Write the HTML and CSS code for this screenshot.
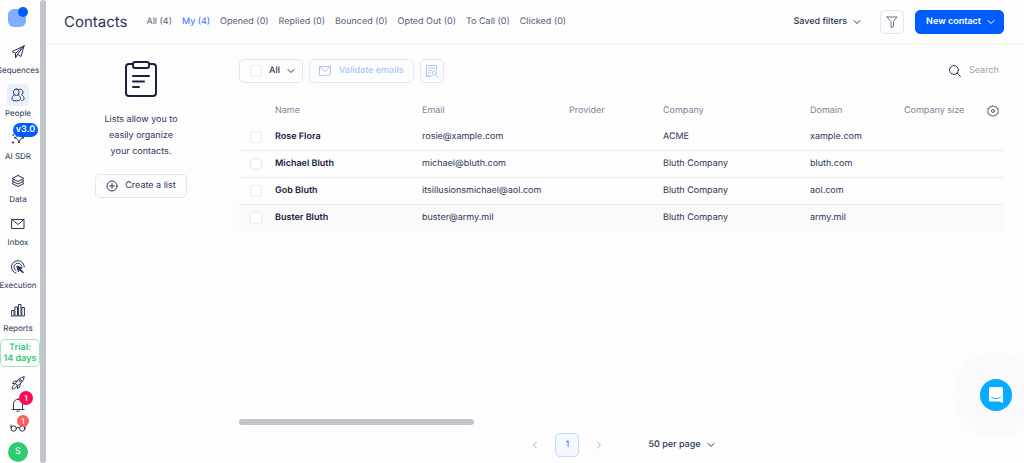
FILE: index.html
```html
<!DOCTYPE html>
<html lang="en">
<head>
    <meta charset="UTF-8">
    <meta name="viewport" content="width=device-width, initial-scale=1.0">
    <title>Contacts</title>
    <link rel="stylesheet" href="styles.css">
</head>
<body>
    <nav class="sidebar">
        <a href="#" class="logo" aria-label="Home">
            <svg width="22" height="20" viewBox="0 0 22 20">
                <rect x="1" y="2" width="18" height="18" rx="6" fill="#80adff"/>
                <circle cx="16" cy="5" r="5" fill="#005cff"/>
            </svg>
        </a>
        <a href="#" class="nav-item">
            <span class="nav-icon"><svg class="icon" width="14" height="14" viewBox="0 0 14 14"><path d="M13 1L1 6.500l3.500 1.800L13 1zM13 1L6.500 9.300l3.500 2.200L13 1zM4.500 8.300V13l2-3.700"/></svg></span>
            <span class="nav-label">Sequences</span>
        </a>
        <a href="#" class="nav-item active">
            <span class="nav-icon"><svg class="icon" width="14" height="14" viewBox="0 0 14 14"><rect x="2.500" y="1" width="5.500" height="6.500" rx="2.700"/><path d="M3 7C1.500 7.800 1 9 1 10.500c0 1.800 1 2.300 4.300 2.300s4.200-.5 4.200-2.300C9.500 9 9 7.800 7.500 7M8 1.300c2-.7 4 .5 4 2.700 0 1.300-.6 2.300-1.400 3 1.600.7 2.400 1.800 2.400 3.500 0 1.400-.8 1.900-2.200 2.100"/></svg></span>
            <span class="nav-label">People</span>
        </a>
        <a href="#" class="nav-item">
            <span class="nav-icon"><svg class="icon" width="14" height="14" viewBox="0 0 14 14"><path d="M8 1c.6 3.800 1.700 5 5 5.700-3.300.7-4.400 1.900-5 5.300-.6-3.400-1.700-4.600-5-5.300C6.300 6 7.400 4.800 8 1z"/><circle cx="2" cy="11.500" r=".7" fill="#2b3653"/><circle cx="2" cy="4" r=".3"/></svg></span>
            <span class="nav-label">AI SDR</span>
            <span class="badge version">v3.0</span>
        </a>
        <a href="#" class="nav-item">
            <span class="nav-icon"><svg class="icon" width="14" height="14" viewBox="0 0 14 14"><path d="M7 1.500l6 3-6 3-6-3 6-3zM2.500 6L1 7l6 3 6-3-1.500-1M2.500 8.700L1 9.500l6 3 6-3-1.500-.8"/></svg></span>
            <span class="nav-label">Data</span>
        </a>
        <a href="#" class="nav-item">
            <span class="nav-icon"><svg class="icon" width="14" height="14" viewBox="0 0 14 14"><path d="M1 2.500h12v9H1zM1 2.500l6 5 6-5"/></svg></span>
            <span class="nav-label">Inbox</span>
        </a>
        <a href="#" class="nav-item">
            <span class="nav-icon"><svg class="icon" width="14" height="14" viewBox="0 0 14 14"><path d="M5 13.200A6.400 6.400 0 1 1 13.300 7M5 10.600A4 4 0 1 1 10.900 6.200"/><path d="M6.200 6.200l5 1.700-2 1 3.300 3.300-.7.700-3.300-3.200-.9 1.800z" fill="#2b3653"/></svg></span>
            <span class="nav-label">Execution</span>
        </a>
        <a href="#" class="nav-item">
            <span class="nav-icon"><svg class="icon" width="14" height="14" viewBox="0 0 14 14"><path d="M.8 7.500H3V13H.8zM4.300 4h2.200v9H4.300zM7.800 1.500H10V13H7.800zM11.200 4.500h2.200V13h-2.200z"/></svg></span>
            <span class="nav-label">Reports</span>
        </a>
        <a href="#" class="trial">Trial:<br>14 days</a>
        <a href="#" class="tool" aria-label="What's new">
            <svg class="icon" width="14" height="14" viewBox="0 0 14 14"><path d="M13 1C9.500 1 6.500 3.500 4.500 7.500l2 2C10.500 7.500 13 4.500 13 1zM6 5H3.500L1.500 7.500l3 .2M9 8v2.500L6.500 12.500l-.2-3M3.500 8.500C2 9.300 1.300 10.800 1 13c2.200-.3 3.700-1 4.500-2.500"/><circle cx="9.300" cy="4.700" r="1.200"/></svg>
        </a>
        <a href="#" class="tool" aria-label="Notifications">
            <svg class="icon" width="14" height="14" viewBox="0 0 14 14"><path d="M1 11.500h12M2.500 11.500v-6C2.500 3 4.500 1.500 7 1.500S11.500 3 11.500 5.500v6M7 .5v1M5.800 13.200h2.400"/></svg>
            <span class="badge count">1</span>
        </a>
        <a href="#" class="tool" aria-label="Watching">
            <svg class="icon" width="16" height="12" viewBox="0 0 16 12"><circle cx="3.700" cy="7.500" r="2.700"/><circle cx="12.300" cy="7.500" r="2.700"/><path d="M6.400 7c1-.8 2.200-.8 3.200 0M1 7V4M15 7V4"/></svg>
            <span class="badge count small">1</span>
        </a>
        <button class="avatar">S</button>
    </nav>
    <div class="sidebar-scroll"></div>

    <main class="page">
        <header class="page-header">
            <h1>Contacts</h1>
            <div class="tabs">
                <a href="#">All (4)</a>
                <a href="#" class="active">My (4)</a>
                <a href="#">Opened (0)</a>
                <a href="#">Replied (0)</a>
                <a href="#">Bounced (0)</a>
                <a href="#">Opted Out (0)</a>
                <a href="#">To Call (0)</a>
                <a href="#">Clicked (0)</a>
            </div>
            <div class="header-actions">
                <button class="btn-text">Saved filters
                    <svg class="icon" width="8" height="6" viewBox="0 0 8 6"><path d="M1 1.500l3 3 3-3"/></svg>
                </button>
                <button class="btn btn-icon" aria-label="Filter">
                    <svg class="icon" width="12" height="12" viewBox="0 0 12 12"><path d="M1 1h10L7.500 5.500v5L5 11.500v-6L1 1z"/></svg>
                </button>
                <button class="btn btn-primary">New contact
                    <svg class="icon" width="8" height="6" viewBox="0 0 8 6"><path d="M1 1.500l3 3 3-3"/></svg>
                </button>
            </div>
        </header>

        <div class="page-body">
            <aside class="lists">
                <svg class="lists-icon" width="32" height="36" viewBox="0 0 32 36"><path d="M8 3H4a3 3 0 0 0-3 3v26a3 3 0 0 0 3 3h24a3 3 0 0 0 3-3V6a3 3 0 0 0-3-3h-4M8 15h16M8 20.500h11M8 26h6"/><rect x="8" y="1" width="16" height="6" rx="2"/></svg>
                <p>Lists allow you to<br>easily organize<br>your contacts.</p>
                <button class="btn create">
                    <svg class="icon" width="12" height="12" viewBox="0 0 12 12"><circle cx="6" cy="6" r="5"/><path d="M6 3.500v5M3.500 6h5"/></svg>
                    Create a list
                </button>
            </aside>

            <section class="contacts">
                <div class="toolbar">
                    <div class="btn select-all">
                        <input type="checkbox" id="selectAll">
                        <label for="selectAll">All</label>
                        <svg class="icon" width="8" height="6" viewBox="0 0 8 6"><path d="M1 1.500l3 3 3-3"/></svg>
                    </div>
                    <button class="btn btn-light validate">
                        <svg class="icon" width="12" height="12" viewBox="0 0 12 12"><path d="M7 10.500H.5v-9h11V8M.5 1.500L6 6.500l5.500-5M8 9.500l1.500 1.500 2-2.500"/></svg>
                        Validate emails
                    </button>
                    <button class="btn btn-light btn-icon" aria-label="Find data">
                        <svg class="icon" width="14" height="14" viewBox="0 0 14 14"><path d="M6.500 12H1.500V1.500h10v5M3.500 4h6M3.500 6.500h3M3.500 9h2.300M1 12.500h4M11 11l2 2"/><circle cx="9.300" cy="9.300" r="2"/></svg>
                    </button>
                    <div class="search">
                        <label for="search" aria-label="Search"><svg class="icon" width="12" height="12" viewBox="0 0 12 12"><circle cx="5" cy="5" r="4.400"/><path d="M8.200 8.200l3.300 3.300"/></svg></label>
                        <input type="text" id="search" placeholder="Search">
                    </div>
                </div>

                <table>
                    <colgroup>
                        <col class="col-check">
                        <col class="col-wide">
                        <col class="col-wide">
                        <col class="col-narrow">
                        <col class="col-wide">
                        <col class="col-narrow">
                        <col>
                        <col class="col-gear">
                    </colgroup>
                    <thead>
                        <tr>
                            <th></th>
                            <th>Name</th>
                            <th>Email</th>
                            <th>Provider</th>
                            <th>Company</th>
                            <th>Domain</th>
                            <th>Company size</th>
                            <th>
                                <button class="gear" aria-label="Column settings">
                                    <svg class="icon" width="12" height="12" viewBox="0 0 12 12"><path d="M6 .6l1.200 1.200 1.800-.4.500 1.700 1.700.5-.4 1.700L11.500 6l-.7 1 .4 1.500-1.700.5L9 10.700l-1.800-.4L6 11.400l-1.200-1.100-1.800.4-.5-1.700-1.700-.5L1.200 7 .5 6l.7-.7-.4-1.700 1.700-.5L3 1.400l1.800.4z"/><circle cx="6" cy="6" r="1.500"/></svg>
                                </button>
                            </th>
                        </tr>
                    </thead>
                    <tbody>
                        <tr>
                            <td><input type="checkbox" aria-label="Select Rose Flora"></td>
                            <td class="name">Rose Flora</td>
                            <td>rosie@xample.com</td>
                            <td></td>
                            <td>ACME</td>
                            <td>xample.com</td>
                            <td></td>
                            <td></td>
                        </tr>
                        <tr>
                            <td><input type="checkbox" aria-label="Select Michael Bluth"></td>
                            <td class="name">Michael Bluth</td>
                            <td>michael@bluth.com</td>
                            <td></td>
                            <td>Bluth Company</td>
                            <td>bluth.com</td>
                            <td></td>
                            <td></td>
                        </tr>
                        <tr>
                            <td><input type="checkbox" aria-label="Select Gob Bluth"></td>
                            <td class="name">Gob Bluth</td>
                            <td>itsillusionsmichael@aol.com</td>
                            <td></td>
                            <td>Bluth Company</td>
                            <td>aol.com</td>
                            <td></td>
                            <td></td>
                        </tr>
                        <tr class="hovered">
                            <td><input type="checkbox" aria-label="Select Buster Bluth"></td>
                            <td class="name">Buster Bluth</td>
                            <td>buster@army.mil</td>
                            <td></td>
                            <td>Bluth Company</td>
                            <td>army.mil</td>
                            <td></td>
                            <td></td>
                        </tr>
                    </tbody>
                </table>

                <div class="table-scroll"></div>

                <footer class="pagination">
                    <button class="page-arrow" aria-label="Previous page"><svg class="icon" width="6" height="8" viewBox="0 0 6 8"><path d="M4.500 1l-3 3 3 3"/></svg></button>
                    <button class="btn btn-icon page-number">1</button>
                    <button class="page-arrow" aria-label="Next page"><svg class="icon" width="6" height="8" viewBox="0 0 6 8"><path d="M1.500 1l3 3-3 3"/></svg></button>
                    <button class="btn-text per-page">50 per page
                        <svg class="icon" width="8" height="6" viewBox="0 0 8 6"><path d="M1 1.500l3 3 3-3"/></svg>
                    </button>
                </footer>
            </section>
        </div>
    </main>

    <button class="chat" aria-label="Open chat">
        <svg width="16" height="18" viewBox="0 0 16 18"><path d="M2.500 1h11A1.500 1.500 0 0 1 15 2.500V17l-3.500-1.500h-9A1.500 1.500 0 0 1 1 14V2.500A1.500 1.500 0 0 1 2.500 1z" fill="#fff"/><path d="M3.500 11.200c2.700 2 6.300 2 9 0" fill="none" stroke="#05acff" stroke-linecap="round"/></svg>
    </button>
</body>
</html>
```
FILE: styles.css
```css
* {
    margin: 0;
    padding: 0;
    box-sizing: border-box;
}

body {
    display: flex;
    height: 100vh;
    overflow: hidden;
    background: #fdfdfe;
    color: #2b3653;
    font-family: Inter, "Liberation Sans", sans-serif;
    font-size: 9px;
    line-height: 14px;
    text-rendering: geometricPrecision;
}

a {
    color: inherit;
    text-decoration: none;
}

button,
input {
    font: inherit;
    color: inherit;
    text-rendering: inherit;
}

button {
    border: none;
    background: none;
    cursor: pointer;
}

svg {
    display: block;
    flex-shrink: 0;
}

.icon {
    fill: none;
    stroke: currentColor;
    stroke-linecap: round;
    stroke-linejoin: round;
}

/* sidebar */
.sidebar {
    flex-shrink: 0;
    display: flex;
    flex-direction: column;
    align-items: center;
    width: 40px;
    padding-top: 7px;
    padding-right: 4px;
}

.sidebar-scroll {
    flex-shrink: 0;
    width: 6px;
    border-radius: 3px;
    background: #bfc4cf;
}

.logo {
    margin-bottom: 14px;
}

.nav-item {
    position: relative;
    display: flex;
    flex-direction: column;
    align-items: center;
    flex-shrink: 0;
}

.nav-item + .nav-item {
    margin-top: 7px;
}

.nav-icon {
    display: flex;
    align-items: center;
    justify-content: center;
    width: 22px;
    height: 22px;
    border-radius: 4px;
}

.nav-item.active .nav-icon {
    background: #e8f0ff;
}

.nav-label {
    font-size: 8px;
    white-space: nowrap;
}

.badge {
    position: absolute;
    border-radius: 7px;
    color: #fff;
    font-weight: 600;
    text-align: center;
}

.version {
    top: -4px;
    left: 8px;
    width: 25px;
    background: #005cff;
}

.trial {
    flex-shrink: 0;
    align-self: stretch;
    margin: 4px -4px 5px 0;
    padding: 2px 0;
    border: 1px solid #9fe6bd;
    border-radius: 5px;
    color: #2ecc71;
    font-weight: 600;
    line-height: 11px;
    text-align: center;
}

.tool {
    position: relative;
    display: flex;
    align-items: center;
    justify-content: center;
    flex-shrink: 0;
    width: 22px;
    height: 22px;
}

.count {
    top: -3px;
    left: 12px;
    width: 14px;
    background: #ff0a54;
    font-size: 8px;
}

.count.small {
    top: -1px;
    left: 10px;
    width: 12px;
    background: #ff5a5f;
    line-height: 12px;
}

.avatar {
    flex-shrink: 0;
    width: 20px;
    height: 20px;
    margin-top: 4px;
    border-radius: 50%;
    background: #2ecc71;
    color: #fff;
}

/* buttons */
.btn {
    display: flex;
    align-items: center;
    justify-content: center;
    height: 24px;
    border: 1px solid #e4e6ec;
    border-radius: 5px;
    white-space: nowrap;
}

.btn-icon {
    width: 24px;
    color: #67718a;
}

.btn-text {
    display: flex;
    align-items: center;
    gap: 6px;
    font-weight: 500;
}

.btn-primary {
    gap: 6px;
    padding: 0 8px 0 10px;
    border-color: #005cff;
    background: #005cff;
    color: #fff;
    font-weight: 600;
}

.btn-light {
    border-color: #dce9ff;
    color: #a9c5ff;
}

/* header */
.page {
    flex: 1;
    display: flex;
    flex-direction: column;
    min-width: 0;
}

.page-header {
    display: flex;
    align-items: center;
    height: 45px;
    padding: 0 20px 0 18px;
    border-bottom: 1px solid #f2f3f5;
}

h1 {
    margin-right: 19px;
    font-size: 15px;
    font-weight: 400;
    line-height: 20px;
}

.tabs {
    display: flex;
    gap: 10px;
    color: #56617a;
    white-space: nowrap;
}

.tabs .active {
    color: #2c6cff;
}

.header-actions {
    display: flex;
    align-items: center;
    margin-left: auto;
}

.header-actions .btn-icon {
    margin: 0 11px 0 19px;
}

/* lists */
.page-body {
    flex: 1;
    display: flex;
    min-height: 0;
}

.lists {
    flex-shrink: 0;
    display: flex;
    flex-direction: column;
    align-items: center;
    width: 190px;
    margin-right: 3px;
    padding-top: 16px;
}

.lists-icon {
    fill: none;
    stroke: #18213f;
    stroke-width: 2;
    stroke-linecap: round;
}

.lists p {
    margin: 15px 0 14px;
    line-height: 16px;
    text-align: center;
}

.create {
    gap: 7px;
    padding: 0 10px;
}

/* contacts */
.contacts {
    flex: 1;
    display: flex;
    flex-direction: column;
    min-width: 0;
    padding: 14px 20px 6px 0;
}

.toolbar {
    display: flex;
    align-items: center;
    gap: 6px;
    margin-bottom: 14px;
}

input[type="checkbox"] {
    appearance: none;
    display: block;
    width: 12px;
    height: 12px;
    border: 1px solid #e8eaef;
    border-radius: 3px;
    background: #fff;
}

.select-all {
    gap: 7px;
    padding: 0 7px 0 10px;
    font-weight: 500;
}

.validate {
    gap: 8px;
    padding: 0 9px;
    font-weight: 500;
}

.search {
    display: flex;
    align-items: center;
    gap: 8px;
    margin-left: auto;
}

.search input {
    width: 35px;
    border: none;
    outline: none;
    background: none;
}

.search input::placeholder {
    color: #9ba2b0;
}

table {
    width: 100%;
    table-layout: fixed;
    border-spacing: 0;
    white-space: nowrap;
}

.col-check {
    width: 36px;
}

.col-wide {
    width: 147px;
}

.col-narrow {
    width: 94px;
}

.col-gear {
    width: 17px;
}

th {
    height: 27px;
    color: #7c8494;
    font-weight: 400;
    text-align: left;
}

td {
    height: 27px;
    border-bottom: 1px solid #ebecef;
}

td:first-child {
    padding-left: 11px;
}

tr:last-child td {
    border-bottom-color: transparent;
}

.name {
    color: #18213f;
    font-weight: 600;
}

.hovered {
    background: #f9f9fa;
}

.gear {
    display: block;
    color: #56617a;
}

.table-scroll {
    width: 235px;
    height: 6px;
    margin-top: auto;
    border-radius: 3px;
    background: #bfc4cf;
}

.pagination {
    display: flex;
    align-items: center;
    justify-content: center;
    margin-top: 8px;
}

.page-arrow {
    padding: 4px;
    color: #a4abb8;
}

.page-number {
    margin: 0 13px;
    border-color: #c4d9ff;
    background: #f4f8ff;
    color: #2c6cff;
}

.per-page {
    margin-left: 42px;
}

/* chat launcher */
.chat {
    position: fixed;
    right: 12px;
    bottom: 52px;
    display: flex;
    align-items: center;
    justify-content: center;
    width: 32px;
    height: 32px;
    border-radius: 50%;
    background: #05acff;
    box-shadow: 0 1px 4px rgba(0, 0, 0, 0.06), 0 0 0 27px rgba(20, 30, 60, 0.01);
}
```
